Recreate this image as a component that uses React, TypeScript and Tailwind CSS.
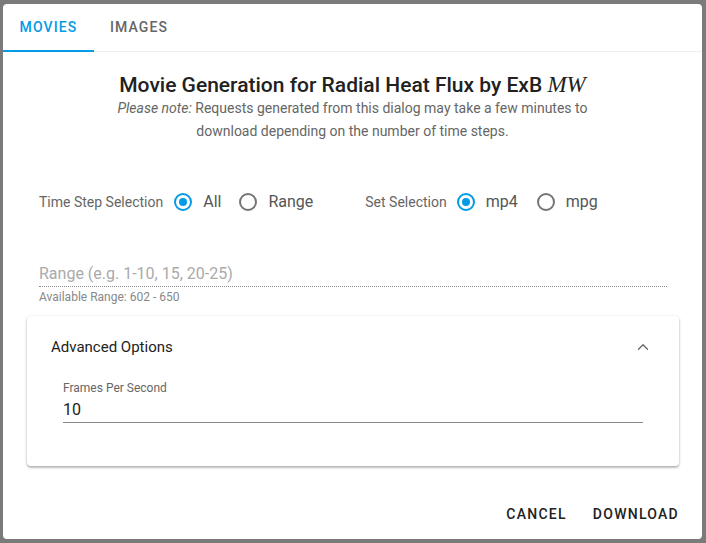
import { ChevronUp } from "lucide-react";

function Radio({ checked, label }: { checked?: boolean; label: string }) {
  return (
    <div className="flex items-center">
      <span
        className={`flex h-[18px] w-[18px] items-center justify-center rounded-full border-2 ${
          checked ? "border-[#039be5]" : "border-[#757575]"
        }`}
      >
        {checked && <span className="h-[8px] w-[8px] rounded-full bg-[#039be5]" />}
      </span>
      <span className="ml-[11px] text-[16px] text-[#555]">{label}</span>
    </div>
  );
}

export default function App() {
  return (
    <div
      className="h-[543px] w-[706px] bg-[#7a7a7a] pl-[3px] pt-[4px]"
      style={{ fontFamily: "Roboto, 'Liberation Sans', sans-serif" }}
    >
      <div className="flex h-[535px] w-[699px] flex-col rounded-[4px] bg-white">
        {/* tabs */}
        <div className="flex h-[48px] border-b border-[#eee] text-[14px] font-medium tracking-[0.08em]">
          <div className="relative flex w-[91px] items-center justify-center text-[#039be5]">
            MOVIES
            <span className="absolute bottom-[-1px] left-0 h-[2px] w-full bg-[#039be5]" />
          </div>
          <div className="flex w-[90px] items-center justify-center text-[#666]">IMAGES</div>
        </div>

        {/* heading */}
        <div className="mt-[21px] text-center">
          <h1 className="text-[21px] font-medium leading-[24px] text-[#212121]">
            Movie Generation for Radial Heat Flux by ExB{" "}
            <span className="text-[23px] font-normal italic" style={{ fontFamily: "'Liberation Serif', serif" }}>
              MW
            </span>
          </h1>
          <p className="mx-auto w-[500px] text-[14px] leading-[23px] text-[#666]">
            <em>Please note:</em> Requests generated from this dialog may take a few minutes to download depending on
            the number of time steps.
          </p>
        </div>

        {/* radios */}
        <div className="mt-[47px] flex items-center pl-[36px] text-[14px] text-[#666]">
          <span className="mr-[11px]">Time Step Selection</span>
          <Radio checked label="All" />
          <div className="ml-[18px]">
            <Radio label="Range" />
          </div>
          <span className="ml-[52px] mr-[10px]">Set Selection</span>
          <Radio checked label="mp4" />
          <div className="ml-[19px]">
            <Radio label="mpg" />
          </div>
        </div>

        {/* range */}
        <div className="ml-[36px] mt-[48px] w-[628px]">
          <div className="border-b border-dotted border-[#888] text-[16px] leading-[24px] text-[#aaa]">
            Range (e.g. 1-10, 15, 20-25)
          </div>
          <div className="mt-[2px] text-[12px] leading-[16px] text-[#888]">Available Range: 602 - 650</div>
        </div>

        {/* advanced */}
        <div className="ml-[24px] mt-[11px] h-[150px] w-[652px] rounded-[4px] bg-white shadow-[0_1px_3px_rgba(0,0,0,0.25),0_2px_2px_rgba(0,0,0,0.14)]">
          <div className="flex h-[62px] items-center justify-between pl-[24px] pr-[27px]">
            <span className="text-[15px] text-[#222]">Advanced Options</span>
            <ChevronUp size={18} strokeWidth={1.75} className="text-[#666]" />
          </div>
          <div className="mx-[36px] mt-[2px]">
            <div className="text-[12px] leading-[16px] text-[#666]">Frames Per Second</div>
            <div className="mt-[3px] border-b border-[#888] pb-[1px] text-[16px] leading-[22px] text-[#222]">10</div>
          </div>
        </div>

        {/* actions */}
        <div className="mt-auto flex justify-end gap-[26px] pb-[14px] pr-[23px] text-[14px] font-medium tracking-[0.09em] text-[#222]">
          <span>CANCEL</span>
          <span>DOWNLOAD</span>
        </div>
      </div>
    </div>
  );
}
